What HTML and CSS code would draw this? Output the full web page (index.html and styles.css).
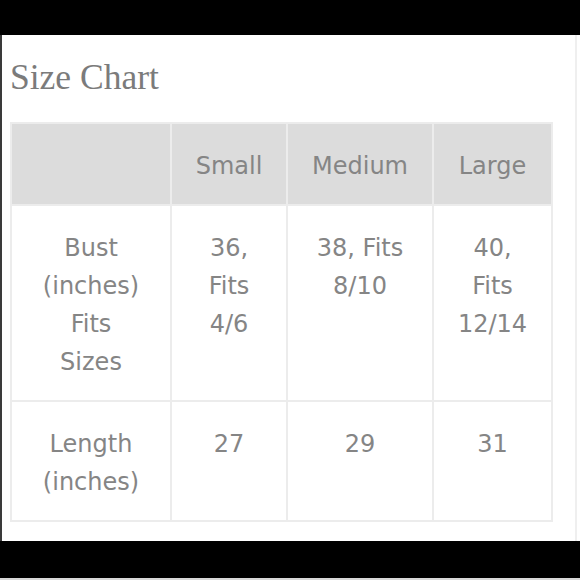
FILE: index.html
```html
<!DOCTYPE html>
<html>
<head>
<meta charset="utf-8">
<link rel="stylesheet" href="styles.css">
</head>
<body>
<div class="bar-top"></div>
<main class="panel">
  <h1 class="title">Size Chart</h1>
  <table class="chart">
    <colgroup>
      <col class="c1"><col class="c2"><col class="c3"><col class="c4">
    </colgroup>
    <thead>
      <tr><th class="label"></th><th>Small</th><th>Medium</th><th>Large</th></tr>
    </thead>
    <tbody>
      <tr><td class="label">Bust (inches) Fits Sizes</td><td>36, Fits 4/6</td><td>38, Fits 8/10</td><td>40, Fits 12/14</td></tr>
      <tr><td class="label">Length (inches)</td><td>27</td><td>29</td><td>31</td></tr>
    </tbody>
  </table>
</main>
<div class="bar-bottom"></div>
</body>
</html>
```
FILE: styles.css
```css
html, body {
  margin: 0;
  padding: 0;
  background: #000;
  width: 580px;
  height: 580px;
  overflow: hidden;
}
.bar-top {
  height: 35px;
  background: #000;
}
.panel {
  height: 506px;
  box-sizing: border-box;
  background: #fff;
  border-left: 2px solid #3a3a3a;
  padding: 22px 0 0 8px;
  position: relative;
}
.panel::after {
  content: "";
  position: absolute;
  top: 0;
  bottom: 0;
  left: 573px;
  width: 2px;
  background: #efefef;
}
.title {
  margin: 0 0 25px 0;
  font-family: "Liberation Serif", serif;
  font-weight: normal;
  font-size: 35.5px;
  line-height: 40px;
  color: #7b7b7b;
}
.chart {
  border-collapse: collapse;
  table-layout: fixed;
  width: 541px;
  font-family: "DejaVu Sans", Verdana, sans-serif;
  font-size: 24px;
  line-height: 38px;
  color: #858585;
}
.c1 { width: 160px; }
.c2 { width: 116px; }
.c3 { width: 146px; }
.c4 { width: 119px; }
.chart th, .chart td {
  border: 2px solid #ececec;
  padding: 23px 20px 19px;
  text-align: center;
  vertical-align: top;
  font-weight: normal;
}
.chart th {
  background: #dcdcdc;
  border-color: #ececec;
}
.chart .label {
  padding-left: 28px;
  padding-right: 28px;
}
.bar-bottom {
  height: 37px;
  background: #000;
  border-bottom: 2px solid #d8d8d8;
}
```
